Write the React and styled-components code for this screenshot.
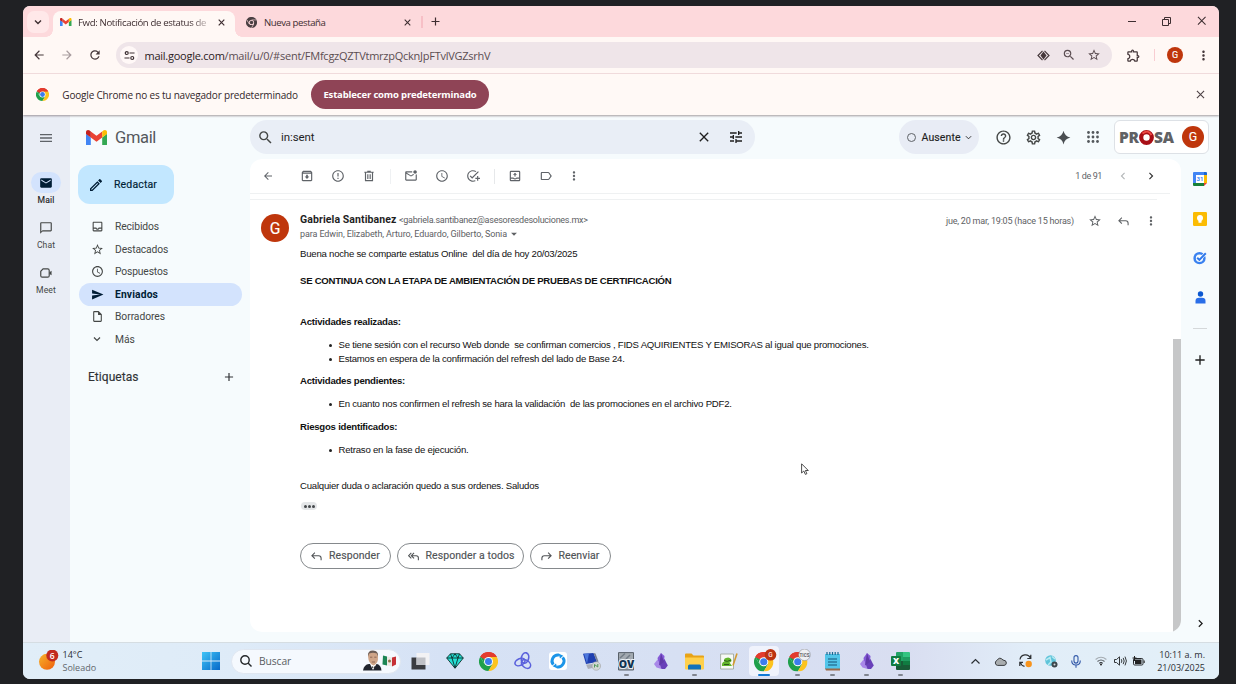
import React from "react";
import styled, { createGlobalStyle, css } from "styled-components";
import {
  MdMenu, MdMail, MdOutlineInbox, MdStarBorder, MdAccessTime, MdSend, MdOutlineInsertDriveFile,
  MdAdd, MdSearch, MdClose, MdTune, MdHelpOutline, MdOutlineSettings,
  MdArrowBack, MdArrowForward, MdOutlineArchive, MdErrorOutline,
  MdOutlineMarkEmailUnread, MdOutlineAddTask, MdLabelOutline, MdMoreVert, MdChevronLeft,
  MdChevronRight, MdOutlineChatBubbleOutline, MdOutlineEdit, MdRefresh,
  MdOutlineZoomOut, MdOutlineExtension, MdArrowDropDown,
} from "react-icons/md";

const GMAIL = `Roboto, "Liberation Sans", sans-serif`;
const SEGOE = `"Open Sans", "Noto Sans", sans-serif`;
const BODY = `"Liberation Sans", Arial, sans-serif`;

const GlobalStyle = createGlobalStyle`
  * { box-sizing: border-box; }
  body { margin: 0; background: #202124; }
  svg { display: block; flex: none; }
  button { font: inherit; border: 0; background: none; padding: 0; margin: 0; color: inherit; }
`;
const medium = css`font-weight: 400; -webkit-text-stroke: .15px currentColor;`;

const Desktop = styled.div`
  width: 1236px; height: 684px; padding: 6px 17px 5px 23px; background: #202124; overflow: hidden;
`;
const Window = styled.div`
  position: relative; display: flex; flex-direction: column; width: 1196px; height: 673px;
  border-radius: 7px; overflow: hidden; background: #f7fbfd;
`;
const Slot = styled.span`
  display: inline-flex; align-items: center; justify-content: center; flex: none;
  width: ${(p) => p.$w}px; margin-left: ${(p) => p.$ml || 0}px; font-size: ${(p) => p.$size || 14}px;
  color: ${(p) => p.$color || "inherit"};
`;
const Spacer = styled.div`flex: 1;`;
const Label = styled.span`
  white-space: pre; letter-spacing: ${(p) => p.$ls || 0}px; margin-left: ${(p) => p.$ml || 0}px;
`;

/* browser chrome */
const TabStrip = styled.div`
  display: flex; height: 31px; flex: none; padding: 5px 0 0 4px; background: #fdd9dc; color: #3e2e31; font: 9.6px ${SEGOE};
`;
const TabSearch = styled.button`
  display: flex; align-items: center; justify-content: center; width: 22px; height: 22px; border-radius: 7px;
  background: #ffe8e9;
`;
const Tab = styled.div`
  position: relative; display: flex; align-items: center; height: 26px; padding-bottom: 4px;
  width: ${(p) => p.$w}px; margin-left: ${(p) => p.$ml}px; padding-left: ${(p) => p.$pl}px;
  ${(p) => p.$active && css`
    background: #fff8f5; border-radius: 8px 8px 0 0;
    &::before, &::after {
      content: ""; position: absolute; bottom: 0; width: 7px; height: 7px;
    }
    &::before { left: -7px; background: radial-gradient(circle at 0 0, transparent 6.5px, #fff8f5 7px); }
    &::after { right: -7px; background: radial-gradient(circle at 100% 0, transparent 6.5px, #fff8f5 7px); }
  `}
`;
const TabTitle = styled.span`
  width: 131px; margin-left: ${(p) => p.$ml}px; white-space: nowrap; letter-spacing: ${(p) => p.$ls}px;
  ${(p) => p.$fade && css`mask-image: linear-gradient(90deg, #000 112px, transparent 136px);`}
`;
const TabRule = styled.span`width: 2px; height: 12px; margin: 5px 0 0 4px; background: #f7bfc6;`;
const StripButton = styled.div`display: flex; align-items: center; justify-content: center; width: 24px; height: 21px;`;
const WindowControls = styled.div`display: flex; align-items: center; height: 22px; margin: -1px 0 0;`;

const AddressRow = styled.div`
  display: flex; align-items: center; height: 37px; flex: none; background: #fff8f5; color: #46383b;
  border-bottom: 1px solid #f6e2e3; padding-left: 2px;
`;
const Omnibox = styled.div`
  display: flex; align-items: center; width: 996px; height: 26px; margin-left: 7px; padding-left: 4px;
  border-radius: 13px; background: #efe5e9; font: 11px ${SEGOE}; color: #5b4d51;
  b { font-weight: 400; color: #2b2123; }
`;
const SiteInfo = styled.span`
  display: flex; align-items: center; justify-content: center; width: 18px; height: 18px; border-radius: 50%; background: #fff8f7;
`;
const Rule = styled.span`width: 1px; height: ${(p) => p.$h}px; margin-left: ${(p) => p.$ml}px; background: ${(p) => p.$c};`;
const Avatar = styled.span`
  display: flex; align-items: center; justify-content: center; flex: none; border-radius: 50%; background: #bf360c; color: #fff;
  width: ${(p) => p.$s}px; height: ${(p) => p.$s}px; font-family: ${GMAIL}; font-size: ${(p) => p.$s * 0.56}px; ${medium}
`;
const InfoBar = styled.div`
  position: relative; z-index: 1; display: flex; align-items: center; height: 41px; flex: none; padding-left: 12.5px;
  background: #fff9f6; box-shadow: 0 1px 2px rgba(60, 40, 45, .45); color: #33272a; font: 10px ${SEGOE};
`;
const InfoText = styled.span`width: 235px; margin-left: 13.8px; white-space: nowrap; letter-spacing: -.18px;`;
const DefaultButton = styled.button`
  width: 178px; height: 29px; margin-left: 13.7px; border-radius: 15px; background: #8f4456; color: #fff;
  font-weight: 700; font-size: 9.5px; letter-spacing: -.16px;
`;

/* Gmail */
const Gmail = styled.div`display: flex; height: 527px; flex: none; font-family: ${GMAIL}; color: #444746;`;
const Rail = styled.nav`
  display: flex; flex-direction: column; align-items: center; width: 47px; background: #e9edf5; padding: 15px 1px 0 0;
`;
const MenuButton = styled.div`height: 42px; font-size: 16px; color: #5f6368;`;
const RailItem = styled.div`
  display: flex; flex-direction: column; align-items: center; height: 45px; font-size: 8.6px; letter-spacing: .1px;
  ${(p) => p.$active && css`color: #1f1f1f; ${medium}`}
`;
const RailPill = styled.span`
  display: flex; align-items: center; justify-content: center; width: 30px; height: 21px; margin-bottom: 2px; border-radius: 11px;
  font-size: 14px; ${(p) => p.$active && css`background: #d3e3fd; color: #001d35;`}
`;
const Sidebar = styled.aside`display: flex; flex-direction: column; width: 180px; background: #f6fbfd;`;
const Brand = styled.div`
  display: flex; align-items: center; height: 45px; padding-left: 16px; font-size: 16.5px; color: #54585c;
`;
const Compose = styled.button`
  display: flex; align-items: center; width: 96px; height: 39px; margin: 5px 0 11.5px 8px; border-radius: 12px;
  background: #c2e7ff; color: #001d35; font-size: 10.5px; ${medium}
`;
const Folder = styled.div`
  display: flex; align-items: center; width: 163px; height: 22.5px; margin-left: 9px; border-radius: 12px; font-size: 10.3px;
  ${(p) => p.$active && css`background: #d3e3fd; color: #001d35; font-weight: 700;`}
`;
const LabelsHead = styled.div`
  display: flex; align-items: center; height: 20px; margin: 16.5px 13px 0 18px; font-size: 12px; color: #303336; letter-spacing: .05px; ${medium}
`;
const Content = styled.div`display: flex; flex-direction: column; flex: 1; background: #f6fbfd;`;
const Header = styled.header`display: flex; align-items: center; height: 44px; padding-right: 10px;`;
const SearchBox = styled.div`
  display: flex; align-items: center; width: 505px; height: 34px; border-radius: 17px; background: #e9eef6;
  font-size: 11.5px; color: #1f1f1f;
`;
const Status = styled.button`
  display: flex; align-items: center; width: 80px; height: 34px; padding-left: 8px; margin-right: 9px; border-radius: 17px;
  background: #e8ecf5; color: #1f1f1f; font-size: 10.5px; ${medium}
`;
const Ring = styled.span`flex: none; width: 9px; height: 9px; border: 1.5px solid #5f6368; border-radius: 50%;`;
const Account = styled.div`
  display: flex; align-items: center; justify-content: space-between; width: 95px; height: 34px; margin-left: 7px; padding: 0 4px 0 4px;
  border: 1px solid #dde1e6; border-radius: 6px; background: #fff;
`;
const Wordmark = styled.span`
  display: flex; align-items: center; font: 800 15.5px "Open Sans", sans-serif; color: #606164; letter-spacing: -.3px;
  svg { margin: 0 .3px 0 0; }
`;
const Body = styled.div`display: flex; height: 483px;`;
const Card = styled.main`
  position: relative; width: 931px; height: 473px; border-radius: 12px; background: #fff; overflow: hidden;
`;
const MailToolbar = styled.div`
  display: flex; align-items: center; height: 35px; width: 920px; padding-right: 5px; border-bottom: 1px solid #eff1f2; font-size: 9px; color: #5f6368;
`;
const Subject = styled.div`height: 6px; width: 907px; border-bottom: 1px solid #eff1f2;`;
const Sender = styled.div`display: flex; padding: 14px 0 0 11px; height: 47px;`;
const SenderText = styled.div`display: flex; flex-direction: column; margin: -1px 0 0 11px; width: 400px; line-height: 14px; font-size: 9px; color: #5e6164;`;
const SenderLine = styled.div`display: flex; align-items: center; height: 14px;`;
const Name = styled.span`font-size: 10.5px; font-weight: 700; color: #1f1f1f; letter-spacing: .09px; white-space: nowrap;`;
const Meta = styled.div`display: flex; align-items: center; height: 14px; margin-left: auto; margin-right: 16px; font-size: 9px; color: #5e6164;`;
const Message = styled.article`
  padding-left: 50px; font: 9.6px/14px ${BODY}; color: #111; white-space: pre;
`;
const Para = styled.p`
  margin: ${(p) => p.$mt || 0}px 0 0; height: 14px; font-weight: ${(p) => (p.$bold ? 700 : 400)}; letter-spacing: ${(p) => p.$ls || -0.23}px;
`;
const List = styled.ul`list-style: none; margin: 9px 0 0; padding: 0 0 0 29px;`;
const Item = styled.li`
  display: flex; align-items: center; height: 14px; letter-spacing: ${(p) => p.$ls || -0.22}px;
  &::before { content: ""; width: 3px; height: 3px; margin: 1px 6.5px 0 0; border-radius: 50%; background: #222; }
`;
const Trimmed = styled.button`
  display: flex; align-items: center; justify-content: center; gap: 1px; width: 16px; height: 8px; margin: 9px 0 0 1px; border-radius: 4px; background: #e4e6e8;
  i { width: 3px; height: 3px; border-radius: 50%; background: #45484b; }
`;
const Actions = styled.div`display: flex; gap: 5.5px; margin-top: 33px; font-family: ${GMAIL};`;
const Action = styled.button`
  display: flex; align-items: center; width: ${(p) => p.$w}px; height: 26px; padding-left: 9px; gap: 6px; border: 1px solid #85898c; border-radius: 13px;
  font-size: 10.5px; color: #505356; letter-spacing: .08px; ${medium}
`;
const ScrollThumb = styled.div`position: absolute; right: 0; top: 180px; width: 8px; height: 293px; background: #c6c7c8;`;
const SidePanel = styled.aside`display: flex; flex-direction: column; align-items: center; width: 38px; height: 483px; color: #1f1f1f;`;
const PanelItem = styled.span`display: flex; align-items: center; justify-content: center; height: ${(p) => p.$h}px; font-size: 15px;`;
const PanelRule = styled.span`width: 14px; height: 1px; background: #d5d8da;`;
const Pointer = styled.svg`position: absolute; left: 778px; top: 457px;`;

/* Windows taskbar */
const Taskbar = styled.footer`
  display: flex; align-items: center; height: 37px; flex: none; border-top: 1px solid #d5dde2; color: #2a2e33; font: 9px ${SEGOE};
  background: linear-gradient(90deg, #e1eef8 0%, #deebf8 18%, #d6e2f5 35%, #d7e0f3 55%, #d9def1 74%, #e1edf8 84%, #e3f0f8 100%);
`;
const Weather = styled.div`display: flex; align-items: center; width: 179px; padding-left: 15px; gap: 3.5px;`;
const TwoLines = styled.div`
  padding-top: 1px; line-height: 12.5px; text-align: ${(p) => p.$align || "left"}; letter-spacing: ${(p) => p.$ls || 0}px; white-space: nowrap;
  span { display: block; } span + span { color: ${(p) => p.$dim || "inherit"}; }
`;
const TaskSearch = styled.div`
  display: flex; align-items: center; width: 170px; height: 25px; margin-left: 11px; padding: 0 3px 0 8px; border-radius: 13px; background: #f5f9fe;
  border: 1px solid #dfe6f0; font-size: 10.3px; color: #5a5e63;
`;
const AppButton = styled.div`
  position: relative; display: flex; align-items: center; justify-content: center; width: 30px; height: 30px; margin: 0 2.18px; border-radius: 4px;
  ${(p) => p.$active && css`background: #f0f3fc;`}
  ${(p) => p.$run && css`
    &::after {
      content: ""; position: absolute; bottom: 0; width: ${p.$active ? 12 : 5}px; height: 2px; border-radius: 1px;
      background: ${p.$active ? "#0f78d4" : "#80858f"};
    }
  `}
`;
const Tray = styled.div`display: flex; align-items: center; margin-left: auto; padding-right: 14px;`;

/* drawings */
const Svg = ({ s = 14, w, h, vb = "0 0 24 24", children, ...r }) => (
  <svg width={w || s} height={h || s} viewBox={vb} fill="none" {...r}>{children}</svg>
);
const ChromeLogo = ({ s, mono }) => {
  const [r, g, y, b] = mono ? ["#4a3f42", "#4a3f42", "#4a3f42", "#4a3f42"] : ["#e33b2e", "#1fa04b", "#fcc31e", "#3b7ded"];
  const bg = mono ? "#fdd9dc" : "#fff";
  return (
    <Svg s={s}>
      <path d="M12 12 1.6 6A12 12 0 0 1 22.4 6Z" fill={r} />
      <path d="M1.6 6A12 12 0 0 0 12 24L17.2 15 12 12 6.8 15Z" fill={g} />
      <path d="M22.4 6A12 12 0 0 1 12 24L17.2 15 12 6Z" fill={y} />
      <path d="M1.6 6 6.8 15 12 12 12 6.4Z" fill={g} />
      <path d="M1.6 6A12 12 0 0 1 22.4 6L22.4 6.4H12L6.8 9Z" fill={r} />
      {mono && <path d="M12 6.3H22M6.9 15 2 6.2M17 15l-5 8.6" stroke={bg} strokeWidth="1.3" />}
      <circle cx="12" cy="12" r="5.6" fill={bg} />
      <circle cx="12" cy="12" r={mono ? 3.8 : 4.4} fill={b} />
    </Svg>
  );
};
const GmailLogo = ({ w }) => (
  <Svg w={w} h={w * 0.75} vb="0 0 24 18">
    <path d="M0 2.5V16.4A1.6 1.6 0 0 0 1.6 18H5.5V8.6L0 4.4Z" fill="#4285f4" />
    <path d="M24 2.5V16.4A1.6 1.6 0 0 1 22.4 18H18.5V8.6L24 4.4Z" fill="#34a853" />
    <path d="M5.5 8.6V1.8L12 6.7 18.5 1.8V8.6L12 13.5Z" fill="#ea4335" />
    <path d="M0 4.5V2.4C0 .2 2.4-.7 4.2.7L5.5 1.8V8.6Z" fill="#c5221f" />
    <path d="M24 4.5V2.4C24 .2 21.6-.7 19.8.7L18.5 1.8V8.6Z" fill="#fbbc04" />
  </Svg>
);
const Reply = ({ s = 14, all, flip }) => (
  <Svg s={s} stroke="currentColor" strokeWidth="2" transform={flip ? "scale(-1 1)" : undefined}>
    {all ? <path d="M8 5.5 3 10.5 8 15.5M13 5.5 8 10.5 13 15.5M8 10.5H17Q21 10.500 21 14.500V19" />
      : <path d="M9 5 3.500 10.500 9 16M4 10.500H16Q20.500 10.500 20.500 15V19" />}
  </Svg>
);
const Chevron = ({ s = 8, sw = 1.2 }) => <Svg s={s} vb="0 0 8 8" stroke="currentColor" strokeWidth={sw}><path d="M1 2.500 4 5.500 7 2.500" /></Svg>;
const NewTab = () => <Svg s={9} vb="0 0 9 9" stroke="currentColor" strokeWidth="1.2"><path d="M4.500 .5V8.500M.5 4.500H8.500" /></Svg>;
const Cross = ({ s = 9, sw = 1.2 }) => <Svg s={s} vb="0 0 10 10" stroke="currentColor" strokeWidth={sw}><path d="M1 1 9 9M9 1 1 9" /></Svg>;
const Tuning = () => (
  <Svg s={11} vb="0 0 12 12" stroke="#3e3134" strokeWidth="1.3">
    <circle cx="3" cy="3.300" r="1.600" /><path d="M6 3.300H11.500M.5 8.700H6" /><circle cx="9" cy="8.700" r="1.600" />
  </Svg>
);
const Lens = () => (
  <Svg w={13} h={11} vb="0 0 13 11"><path d="M5.500 .8 1 5.500 5.500 10.200M7.500 .8 12 5.500 7.500 10.200" stroke="#46383b" strokeWidth="1.200" />
    <path d="M6.500 1.500 9.500 5.500 6.500 9.500 3.500 5.500Z" fill="#46383b" /></Svg>
);
const Calendar = () => (
  <Svg s={14} vb="0 0 14 14"><path d="M0 1Q0 0 1 0H11V3H3V11H0Z" fill="#4285f4" /><path d="M11 0H13Q14 0 14 1V3H11Z" fill="#1967d2" />
    <path d="M11 3H14V11H11Z" fill="#fbbc04" /><path d="M0 11H11V14H1Q0 14 0 13Z" fill="#188038" /><path d="M11 11H14L11 14Z" fill="#ea4335" />
    <path d="M3 3H11V11H3Z" fill="#fff" /><text x="7" y="9.300" fontSize="6" fontWeight="700" textAnchor="middle" fontFamily="Roboto" fill="#4285f4">31</text></Svg>
);
const Keep = () => (
  <Svg s={14} vb="0 0 14 14"><rect width="14" height="14" rx="1.200" fill="#fbbc04" /><circle cx="7" cy="6" r="3" fill="#fff" /><path d="M5.500 8H8.500V10.800H5.500Z" fill="#fff" /></Svg>
);
const Tasks = () => (
  <Svg s={14} vb="0 0 14 14"><circle cx="6.500" cy="7.200" r="4.900" stroke="#3b82f0" strokeWidth="2.500" /><path d="M4.300 6.800 6.400 8.800 12.500 2.400" stroke="#fff" strokeWidth="3" /><path d="M4.200 6.700 6.400 8.900 12.800 2.200" stroke="#2f78ea" strokeWidth="2" /></Svg>
);
const Contacts = () => (
  <Svg s={13} vb="0 0 13 13"><circle cx="6.500" cy="3" r="2.700" fill="#0b57d0" /><path d="M1.500 12.500V10Q1.500 6.700 5 6.700H8Q11.500 6.700 11.500 10V12.500Z" fill="#2a6ee8" /></Svg>
);
const Sparkle = () => <Svg s={15}><path d="M12 1Q14 10 23 12 14 14 12 23 10 14 1 12 10 10 12 1Z" fill="#4a4e52" /></Svg>;
const AppsGrid = () => (
  <Svg s={12} vb="0 0 12 12" fill="#54585c">
    {[1.5, 6, 10.5].map((y) => [1.5, 6, 10.5].map((x) => <circle key={`${x}-${y}`} cx={x} cy={y} r="1.4" />))}
  </Svg>
);
const Camera = () => (
  <Svg s={14} stroke="currentColor" strokeWidth="2"><path d="M7 5H15Q17.500 5 17.500 7.500V16.500Q17.500 19 15 19H5.500Q3 19 3 16.500V9Z" /><path d="M18 10.500 21.500 8V16L18 13.500Z" fill="currentColor" stroke="none" /></Svg>
);
const Trash = () => (
  <Svg s={14} stroke="currentColor" strokeWidth="2"><path d="M6 6.500V20H18V6.500M4 5.500H20M9 4H15M10 9V17M14 9V17" /></Svg>
);
const InboxMove = () => (
  <Svg s={14} stroke="currentColor" strokeWidth="2"><rect x="4" y="4" width="16" height="16" rx="1" /><path d="M4 15.500H9Q12 18.500 15 15.500H20" /><path d="M12 6.500 8.500 10H11V13H13V10H15.500Z" fill="currentColor" stroke="none" /></Svg>
);
const Sun = () => (
  <Svg w={21} h={22} vb="0 0 21 22"><defs><linearGradient id="sun" x1="0" y1="0" x2="1" y2="1"><stop stopColor="#f7b32c" /><stop offset="1" stopColor="#ee5e0c" /></linearGradient></defs>
    <circle cx="9" cy="11.800" r="8" fill="url(#sun)" /><circle cx="14.300" cy="5.600" r="6" fill="#c22b1f" />
    <text x="14.300" y="8.600" fontSize="8.500" fontFamily="Open Sans" fontWeight="600" textAnchor="middle" fill="#fff">6</text></Svg>
);
const Start = () => (
  <Svg s={18} vb="0 0 18 18"><defs><linearGradient id="win" x1="0" y1="0" x2="1" y2="1"><stop stopColor="#3fc4f7" /><stop offset="1" stopColor="#0768c8" /></linearGradient></defs>
    <path d="M0 0H8.600V8.600H0ZM9.400 0H18V8.600H9.400ZM0 9.400H8.600V18H0ZM9.400 9.400H18V18H9.400Z" fill="url(#win)" /></Svg>
);
const Portrait = () => (
  <Svg w={35} h={22} vb="0 0 35 22">
    <path d="M1 20.500Q2 14.500 7 14H15Q19 15 19.500 20.500Z" fill="#20242d" /><path d="M8 14 11 20 14.500 14Z" fill="#fff" />
    <path d="M6 6Q6 1 11 1 16 1 16 6 16.500 14 11.500 15.500 6.500 14 6 6Z" fill="#cfa588" /><path d="M6 6.500Q5.500 .5 11 .6 16.500 .8 16 6.500L14.800 3.500Q11 1.800 7.200 3.500Z" fill="#6b5d56" />
    <path d="M8 7.200H10.300M12.300 7.200H14.500M9.800 12H13" stroke="#7d5b4a" strokeWidth=".8" /><path d="M10 16.200 13 18V16.200L10 18Z" fill="#111" />
    <path d="M21 5.500 25 6.500V15.500L20.500 14.500Z" fill="#1c8554" /><path d="M25 6.500 30 7.500V16.500L25 15.500Z" fill="#ece9e4" /><path d="M30 7.500 34 6.500V14.500L30 16.500Z" fill="#c63035" /><circle cx="27.500" cy="11" r="1.500" fill="#8f7146" />
  </Svg>
);
const TaskView = () => (
  <Svg s={19} vb="0 0 19 19"><path d="M.5 5.500H14.500V17.500H.5Z" fill="#3a3c40" /><path d="M5.500 1H18.500V13H5.500Z" fill="#f2f2f4" /><path d="M5.500 5.500H14.500V13H5.500Z" fill="#bfc1c6" /></Svg>
);
const Gem = () => (
  <Svg w={18} h={16} vb="0 0 18 16" stroke="#0e2c2c" strokeWidth=".9" strokeLinejoin="round"><path d="M4.500 .8H13.500L17.300 5 9 15.300.7 5Z" fill="#25e0d4" /><path d="M.7 5H17.300M4.500 .8 6 5 9 15 12 5 13.500 .8M9 .8 6 5M9 .8 12 5" /></Svg>
);
const Knot = () => (
  <Svg s={18} vb="0 0 18 18" stroke="#5a60dc" strokeWidth="1.600"><ellipse cx="11" cy="6" rx="3.600" ry="5.300" transform="rotate(15 11 6)" /><ellipse cx="6" cy="10" rx="5.300" ry="3.400" transform="rotate(-25 6 10)" /><ellipse cx="12" cy="12" rx="5.200" ry="3.600" transform="rotate(40 12 12)" /></Svg>
);
const Cloudsync = () => (
  <Svg s={18} vb="0 0 18 18"><rect width="18" height="18" rx="3" fill="#fff" /><path d="M4.300 12.700A6 6 0 0 1 10 3.100M13.700 5.300A6 6 0 0 1 8 14.900" stroke="#1b94e8" strokeWidth="2.900" /><path d="M9.500 1.600 14.300 3.800 11 6.500ZM8.500 16.400 3.700 14.200 7 11.500Z" fill="#1b94e8" /></Svg>
);
const Remote = () => (
  <Svg s={19} vb="0 0 19 19"><path d="M1 1.800 11.500 1 15 10 4 12Z" fill="#1e3fb0" /><path d="M11.500 1 13.500 1.500 16.500 9.500 15 10Z" fill="#788091" /><path d="M2 1.800 7 1.500 5 11.500Z" fill="#4c77dc" /><path d="M4 12.500 12 12 14.500 15 6 17Z" fill="#a9adb8" /><circle cx="14.300" cy="14" r="4.300" fill="#d3d8d5" stroke="#999" strokeWidth=".5" /><path d="M12.500 15.500V12.500L15.800 15V12" stroke="#52995a" /></Svg>
);
const Ov = () => (
  <Svg w={18} h={19} vb="0 0 18 19"><path d="M1.500 .6H16.500V18H1.500Z" fill="#a2a9b0" stroke="#59616a" /><path d="M3 6 8 1.500M13 3 9 7" stroke="#727c86" strokeWidth="1.500" /><text x="9.500" y="15.600" fontSize="10.500" fontWeight="800" textAnchor="middle" fontFamily="Open Sans" fill="#123452" stroke="#e9eef3" strokeWidth="2.200" paintOrder="stroke">OV</text></Svg>
);
const Crystal = () => (
  <Svg w={14} h={17} vb="0 0 14 17"><path d="M7 0 10.500 3 10 9 5 12.500 3.500 5Z" fill="#855ad7" /><path d="M3.500 6.500 0 11 2.500 14.500 7.500 16 5.800 11Z" fill="#a887e8" /><path d="M10.500 6 13.800 12.500 11 16 7.500 16 5.500 11Z" fill="#6840b9" /><path d="M7 0 5 12.500 10 9Z" fill="#603aa9" /></Svg>
);
const Explorer = () => (
  <Svg w={19} h={17} vb="0 0 19 17"><path d="M0 1.500Q0 .5 1 .5H6.500L8.500 2.500H18Q19 2.500 19 3.500V7H0Z" fill="#e8a317" /><path d="M0 4.500H19V15.500Q19 16.500 18 16.500H1Q0 16.500 0 15.500Z" fill="#ffd04b" /><path d="M3 16.500V13Q3 11.500 4.500 11.500H14.500Q16 11.500 16 13V16.500Z" fill="#1272ba" /></Svg>
);
const Notepp = () => (
  <Svg w={18} h={18} vb="0 0 18 18"><path d="M.6 2H13.500V17H.6Z" fill="#f7faf6" stroke="#98a196" strokeWidth=".8" /><path d="M2 14Q1.500 10 4.500 9.500 3 7 6 6 9 4.500 11 7 12.500 9.500 9.500 10.500L12 14Z" fill="#62b52b" /><path d="M4 8.500Q7 10.500 11 8M4 12.500H9" stroke="#294f1a" strokeWidth=".9" /><path d="M13 13.500 17 1.500" stroke="#d29b31" strokeWidth="1.600" /></Svg>
);
const ChromeProfile = ({ kind }) => (
  <Svg w={26} h={24} vb="0 0 26 24">
    <g transform="translate(3 3)"><ChromeLogo s={19.500} /></g>
    <circle cx="19.500" cy="5.800" r="5.800" fill={kind === "G" ? "#bb3312" : "#eff1f3"} stroke={kind === "G" ? "none" : "#8d9195"} strokeWidth=".6" />
    <text x="19.500" y="8" fontSize={kind === "G" ? 6.500 : 4.600} fontWeight="600" textAnchor="middle" fontFamily="Roboto" fill={kind === "G" ? "#ffdcd5" : "#505458"}>{kind}</text>
  </Svg>
);
const Notes = () => (
  <Svg w={15} h={19} vb="0 0 15 19"><path d="M0 2H15V17H0Z" fill="#52c5e9" /><path d="M0 16.500H15V18.500H1Z" fill="#9b6947" /><path d="M2 0V3M4.800 0V3M7.500 0V3M10.200 0V3M13 0V3" stroke="#1a6890" strokeWidth="1.200" /><path d="M3 7H12M3 10H12M3 13H12" stroke="#155577" strokeWidth="1.100" /></Svg>
);
const Excel = () => (
  <Svg w={19} h={18} vb="0 0 19 18"><path d="M5 1Q5 0 6 0H12V9H5Z" fill="#21a366" /><path d="M12 0H18Q19 0 19 1V5H12Z" fill="#33c481" /><path d="M12 5H19V9H12Z" fill="#1f9c60" /><path d="M5 9H19V17Q19 18 18 18H6Q5 18 5 17Z" fill="#185c37" /><path d="M12 9H19V13H12Z" fill="#107c41" /><rect y="4" width="10" height="10" rx="1" fill="#107c41" /><text x="5" y="12" fontSize="8.500" fontWeight="800" textAnchor="middle" fontFamily="Open Sans" fill="#fff">X</text></Svg>
);

const folders = [
  [MdOutlineInbox, "Recibidos", -0.12], [MdStarBorder, "Destacados", -0.13], [MdAccessTime, "Pospuestos", -0.15],
  [MdSend, "Enviados", 0.14, true], [MdOutlineInsertDriveFile, "Borradores", -0.05], [Chevron, "Más", -0.1],
];
const apps = [
  [TaskView], [Gem], [() => <ChromeLogo s={19} />], [Knot], [Cloudsync], [Remote], [Ov, true], [Crystal], [Explorer, true],
  [Notepp], [() => <ChromeProfile kind="G" />, true, true], [() => <ChromeProfile kind="TICS" />, true], [Notes, true], [Crystal, true], [Excel, true],
];

export default function App() {
  return (
    <Desktop>
      <GlobalStyle />
      <Window>
        <TabStrip>
          <TabSearch><Chevron s={8} sw={1.400} /></TabSearch>
          <Tab $active $w={182} $ml={4} $pl={7}>
            <GmailLogo w={11.5} />
            <TabTitle $ml={6.500} $ls={-0.350} $fade>Fwd: Notificación de estatus de</TabTitle>
            <Slot $w={18} $ml={3.500}><Cross s={7} sw={1.700} /></Slot>
          </Tab>
          <Tab $w={182} $ml={0} $pl={11}>
            <ChromeLogo s={11} mono />
            <TabTitle $ml={7} $ls={-0.42}>Nueva pestaña</TabTitle>
            <Slot $w={18} $ml={3}><Cross s={7} sw={1.500} /></Slot>
          </Tab>
          <TabRule />
          <StripButton><NewTab /></StripButton>
          <Spacer />
          <WindowControls>
            <Slot $w={35}><Svg s={8} vb="0 0 8 8" stroke="currentColor"><path d="M0 4.500H8" /></Svg></Slot>
            <Slot $w={35}><Svg s={9} vb="0 0 9 9" stroke="currentColor"><path d="M.5 2.500H6.500V8.500H.5ZM2.500 2V.5H8.500V6.500H7" /></Svg></Slot>
            <Slot $w={35}><Cross s={9.500} sw={1.100} /></Slot>
          </WindowControls>
        </TabStrip>
        <AddressRow>
          <Slot $w={28}><MdArrowBack /></Slot>
          <Slot $w={28} $color="#a89c9e"><MdArrowForward /></Slot>
          <Slot $w={28}><MdRefresh /></Slot>
          <Omnibox>
            <SiteInfo><Tuning /></SiteInfo>
            <Label $ml={6.500} $ls={-0.250}><b>mail.google.com</b>/mail/u/0/#sent/FMfcgzQZTVtmrzpQcknJpFTvlVGZsrhV</Label>
            <Spacer />
            <Slot $w={25}><Lens /></Slot>
            <Slot $w={25}><MdOutlineZoomOut /></Slot>
            <Slot $w={25}><MdStarBorder /></Slot>
            <Slot $w={6} />
          </Omnibox>
          <Slot $w={28} $ml={7} $size={15}><MdOutlineExtension /></Slot>
          <Rule $h={12} $ml={6.500} $c="#f8cdd2" />
          <Slot $w={20} $ml={10.500}><Avatar $s={16}>G</Avatar></Slot>
          <Slot $w={20} $ml={8} $size={15}><MdMoreVert /></Slot>
        </AddressRow>
        <InfoBar>
          <ChromeLogo s={13} />
          <InfoText>Google Chrome no es tu navegador predeterminado</InfoText>
          <DefaultButton>Establecer como predeterminado</DefaultButton>
          <Spacer />
          <Slot $w={38} $color="#4d4144"><Cross s={9} /></Slot>
        </InfoBar>

        <Gmail>
          <Rail>
            <MenuButton><MdMenu /></MenuButton>
            <RailItem $active><RailPill $active><MdMail /></RailPill>Mail</RailItem>
            <RailItem><RailPill><MdOutlineChatBubbleOutline /></RailPill>Chat</RailItem>
            <RailItem><RailPill><Camera /></RailPill>Meet</RailItem>
          </Rail>
          <Sidebar>
            <Brand><GmailLogo w={21} /><Label $ml={8} $ls={-0.350}>Gmail</Label></Brand>
            <Compose><Slot $w={36} $size={16}><MdOutlineEdit /></Slot><Label $ls={0.150}>Redactar</Label></Compose>
            {folders.map(([Icon, text, ls, active]) => (
              <Folder key={text} $active={active}><Slot $w={36} $size={13}><Icon /></Slot><Label $ls={ls}>{text}</Label></Folder>
            ))}
            <LabelsHead>Etiquetas<Spacer /><Slot $w={16} $size={14}><MdAdd /></Slot></LabelsHead>
          </Sidebar>
          <Content>
            <Header>
              <SearchBox>
                <Slot $w={31} $size={17} $color="#444746"><MdSearch /></Slot><Label $ls={-0.1}>in:sent</Label><Spacer />
                <Slot $w={32} $size={16}><MdClose /></Slot><Slot $w={31} $size={16}><MdTune /></Slot><Slot $w={4} />
              </SearchBox>
              <Spacer />
              <Status><Ring /><Label $ml={5.500} $ls={0.120}>Ausente</Label><Slot $w={16}><Chevron s={7} sw={1} /></Slot></Status>
              <Slot $w={30} $size={17}><MdHelpOutline /></Slot>
              <Slot $w={30.500} $size={17}><MdOutlineSettings /></Slot>
              <Slot $w={30}><Sparkle /></Slot>
              <Slot $w={28.500}><AppsGrid /></Slot>
              <Account>
                <Wordmark>PR<Svg w={15} h={15} vb="0 0 15 15"><circle cx="7.500" cy="7.500" r="5.300" stroke="#a80f16" strokeWidth="4.200" /><path d="M3.500 3.500Q9-1 12.500 5" stroke="#f04a45" strokeWidth="1.800" /></Svg>SA</Wordmark>
                <Avatar $s={22}>G</Avatar>
              </Account>
            </Header>
            <Body>
              <Card>
                <MailToolbar>
                  <Slot $w={36}><MdArrowBack size={12} /></Slot>
                  <Slot $w={31} $ml={5.500}><MdOutlineArchive /></Slot>
                  <Slot $w={31}><MdErrorOutline /></Slot>
                  <Slot $w={31}><Trash /></Slot>
                  <Rule $h={15} $ml={5} $c="#eff1f3" />
                  <Slot $w={31} $ml={5}><MdOutlineMarkEmailUnread /></Slot>
                  <Slot $w={31}><MdAccessTime /></Slot>
                  <Slot $w={31}><MdOutlineAddTask /></Slot>
                  <Rule $h={15} $ml={5} $c="#e6e8ea" />
                  <Slot $w={31} $ml={5}><InboxMove /></Slot>
                  <Slot $w={31}><MdLabelOutline /></Slot>
                  <Slot $w={25}><MdMoreVert /></Slot>
                  <Spacer />
                  <Label $ls={-0.400}>1 de 91</Label>
                  <Slot $w={28} $ml={7} $color="#b4b7b9"><MdChevronLeft /></Slot>
                  <Slot $w={28} $color="#333"><MdChevronRight /></Slot>
                </MailToolbar>
                <Subject />
                <Sender>
                  <Avatar $s={28}>G</Avatar>
                  <SenderText>
                    <SenderLine><Name>Gabriela Santibanez</Name><Label $ml={2.500} $ls={-0.250}>&lt;gabriela.santibanez@asesoresdesoluciones.mx&gt;</Label></SenderLine>
                    <SenderLine><Label $ls={-0.110}>para Edwin, Elizabeth, Arturo, Eduardo, Gilberto, Sonia</Label><MdArrowDropDown size={14} /></SenderLine>
                  </SenderText>
                  <Meta>
                    <Label $ls={-0.200}>jue, 20 mar, 19:05 (hace 15 horas)</Label>
                    <Slot $w={28} $ml={7}><MdStarBorder /></Slot>
                    <Slot $w={28}><Reply s={13} /></Slot>
                    <Slot $w={28}><MdMoreVert /></Slot>
                  </Meta>
                </Sender>
                <Message>
                  <Para>Buena noche se comparte estatus Online  del día de hoy 20/03/2025</Para>
                  <Para $mt={13} $bold $ls={-0.270}>SE CONTINUA CON LA ETAPA DE AMBIENTACIÓN DE PRUEBAS DE CERTIFICACIÓN</Para>
                  <Para $mt={27} $bold>Actividades realizadas:</Para>
                  <List>
                    <Item $ls={-0.230}>Se tiene sesión con el recurso Web donde  se confirman comercios , FIDS AQUIRIENTES Y EMISORAS al igual que promociones.</Item>
                    <Item>Estamos en espera de la confirmación del refresh del lado de Base 24.</Item>
                  </List>
                  <Para $mt={8} $bold>Actividades pendientes:</Para>
                  <List><Item>En cuanto nos confirmen el refresh se hara la validación  de las promociones en el archivo PDF2.</Item></List>
                  <Para $mt={9} $bold>Riesgos identificados:</Para>
                  <List><Item>Retraso en la fase de ejecución.</Item></List>
                  <Para $mt={22}>Cualquier duda o aclaración quedo a sus ordenes. Saludos</Para>
                  <Trimmed><i /><i /><i /></Trimmed>
                  <Actions>
                    <Action $w={91}><Reply s={13} />Responder</Action>
                    <Action $w={127.500}><Reply s={13} all />Responder a todos</Action>
                    <Action $w={81}><Reply s={13} flip />Reenviar</Action>
                  </Actions>
                </Message>
                <ScrollThumb />
              </Card>
              <SidePanel>
                <PanelItem $h={40}><Calendar /></PanelItem>
                <PanelItem $h={39}><Keep /></PanelItem>
                <PanelItem $h={40}><Tasks /></PanelItem>
                <PanelItem $h={39}><Contacts /></PanelItem>
                <PanelItem $h={11} /><PanelRule />
                <PanelItem $h={62}><MdAdd size={16} /></PanelItem>
                <Spacer />
                <PanelItem $h={38}><MdChevronRight /></PanelItem>
              </SidePanel>
            </Body>
          </Content>
        </Gmail>

        <Taskbar>
          <Weather><Sun /><TwoLines $dim="#62676c"><span>14°C</span><span>Soleado</span></TwoLines></Weather>
          <Start />
          <TaskSearch>
            <Svg s={12} vb="0 0 12 12" stroke="#25282b" strokeWidth="1.400"><circle cx="5" cy="5" r="4.200" /><path d="M8 8 11.500 11.500" /></Svg>
            <Label $ml={7} $ls={-0.1}>Buscar</Label><Spacer /><Portrait />
          </TaskSearch>
          <Slot $w={2} />
          {apps.map(([Icon, run, active], i) => <AppButton key={i} $run={run} $active={active}><Icon /></AppButton>)}
          <Tray>
            <Slot $w={25}><Svg s={9} vb="0 0 9 9" stroke="currentColor" strokeWidth="1.200"><path d="M.5 6.500 4.500 2.500 8.500 6.500" /></Svg></Slot>
            <Slot $w={25}><Svg w={13} h={9} vb="0 0 13 9"><path d="M3.500 8.400A2.600 2.600 0 0 1 3 3.400Q5.500-.8 9 3 12.400 3.200 12.400 6 12 8.400 10 8.400Z" fill="#a9adaf" stroke="#3a3d40" /></Svg></Slot>
            <Slot $w={26}><Svg s={14} vb="0 0 14 14"><path d="M1 5.500A5.500 5.500 0 0 1 11.500 4.200M11.800 .8V4.500H8.300M5.500 12.300A5.500 5.500 0 0 1 1.300 8M.8 12V8.300H4" stroke="#2d3033" strokeWidth="1.200" /><circle cx="9.700" cy="10" r="3.200" fill="#f7941d" /></Svg></Slot>
            <Slot $w={25}><Svg s={13} vb="0 0 13 13"><circle cx="5.500" cy="5.500" r="5.300" fill="#5fc4da" /><path d="M1 5 5 2.500 6 7 3 10M7 1.500 10 4" stroke="#b8eaf2" strokeWidth="1.500" /><circle cx="9.500" cy="9.500" r="3" fill="#3d474c" /><circle cx="9.500" cy="9.500" r="1" fill="#d2dadd" /></Svg></Slot>
            <Slot $w={24}><Svg w={10} h={13} vb="0 0 10 13" stroke="#3158a8" strokeWidth="1.100"><rect x="3" y=".6" width="4" height="7.500" rx="2" /><path d="M.7 5.500Q.7 10 5 10 9.300 10 9.300 5.500M5 10V12.800" /></Svg></Slot>
            <Slot $w={25}><Svg w={12} h={10} vb="0 0 12 10" strokeWidth="1.100"><path d="M.6 3.500Q6-1 11.400 3.500" stroke="#a6adb3" /><path d="M2.500 5.500Q6 2.500 9.500 5.500" stroke="#5b6166" /><path d="M4.300 7.300Q6 5.800 7.700 7.300" stroke="#2c2f32" /><circle cx="6" cy="8.500" r="1" fill="#222" /></Svg></Slot>
            <Slot $w={14}><Svg w={13} h={10} vb="0 0 13 10" stroke="#33373a"><path d="M.5 3.500H2.500L5.500 .8V9.200L2.500 6.500H.5ZM7.300 3.200Q8.500 5 7.300 6.800M9.200 1.900Q11.200 5 9.200 8.100M11 .6Q13.800 5 11 9.400" /></Svg></Slot>
            <Slot $w={23}><Svg w={13} h={10} vb="0 0 13 10"><rect x="1.500" y="2.500" width="9.500" height="6.500" rx="1.200" stroke="#25282b" /><path d="M3 3.500H9.500V8H3Z" fill="#222" /><path d="M12.200 4.500V7M2.500 0V5M.5 2H4.500" stroke="#222" /></Svg></Slot>
            <Slot $w={7} />
            <TwoLines $align="right" $ls={0}><span>10:11 a. m.</span><span>21/03/2025</span></TwoLines>
          </Tray>
        </Taskbar>
        <Pointer width="8" height="12" viewBox="0 0 8 12"><path d="M.6 .8V10L2.800 8 4.400 11.400 5.900 10.700 4.400 7.500H7.300Z" fill="#fff" stroke="#222" strokeWidth=".8" /></Pointer>
      </Window>
    </Desktop>
  );
}
